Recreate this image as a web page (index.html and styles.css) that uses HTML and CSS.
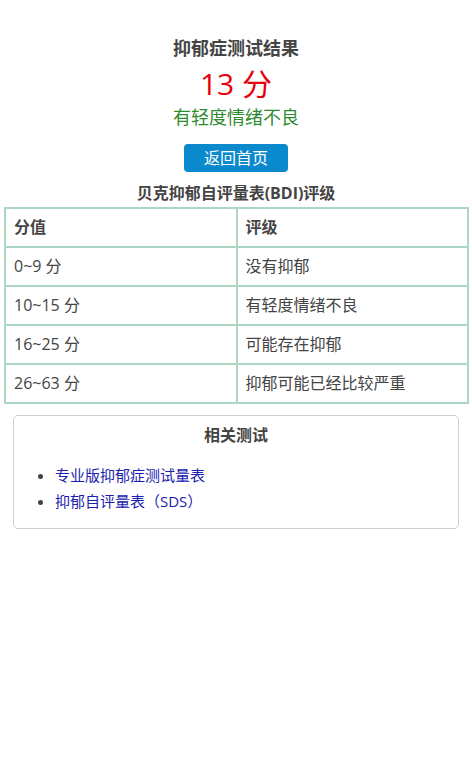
FILE: index.html
```html
<!DOCTYPE html>
<html lang="zh-CN">
<head>
<meta charset="utf-8">
<title>抑郁症测试结果</title>
<link rel="stylesheet" href="styles.css">
</head>
<body>
<div class="page">
  <div class="result">
    <h1 class="title">抑郁症测试结果</h1>
    <div class="score">13 分</div>
    <div class="verdict">有轻度情绪不良</div>
    <a class="btn" href="#">返回首页</a>
  </div>
  <h2 class="table-title">贝克抑郁自评量表(BDI)评级</h2>
  <table class="grade">
    <thead>
      <tr><th>分值</th><th>评级</th></tr>
    </thead>
    <tbody>
      <tr><td>0~9 分</td><td>没有抑郁</td></tr>
      <tr><td>10~15 分</td><td>有轻度情绪不良</td></tr>
      <tr><td>16~25 分</td><td>可能存在抑郁</td></tr>
      <tr><td>26~63 分</td><td>抑郁可能已经比较严重</td></tr>
    </tbody>
  </table>
  <div class="related">
    <h3 class="related-title">相关测试</h3>
    <ul class="related-list">
      <li><a href="#">专业版抑郁症测试量表</a></li>
      <li><a href="#">抑郁自评量表（SDS）</a></li>
    </ul>
  </div>
</div>
</body>
</html>
```
FILE: styles.css
```css
html, body {
  margin: 0;
  padding: 0;
  background: #fff;
}
body {
  font-family: "Open Sans", "Noto Sans CJK SC", sans-serif;
  color: #444;
}
.page {
  padding-top: 36px;
}
.result {
  display: flex;
  flex-direction: column;
  align-items: center;
}
.title {
  margin: 0;
  font-size: 18px;
  line-height: 24px;
  font-weight: bold;
  color: #444;
}
.score {
  margin-top: 6px;
  font-size: 30px;
  line-height: 36px;
  color: #e8000b;
}
.verdict {
  margin-top: 3px;
  font-size: 18px;
  line-height: 24px;
  color: #2f8a2f;
}
.btn {
  margin-top: 15px;
  width: 104px;
  height: 28px;
  line-height: 28px;
  text-align: center;
  background: #0b89cd;
  color: #fff;
  border-radius: 4px;
  font-size: 16px;
  text-decoration: none;
}
.table-title {
  margin: 10px 0 3px;
  text-align: center;
  font-size: 16px;
  line-height: 22px;
  font-weight: bold;
  color: #444;
}
.grade {
  margin-left: 4px;
  width: 465px;
  border-collapse: collapse;
  border: 2px solid #acd7c2;
  table-layout: fixed;
}
.grade th, .grade td {
  border: 2px solid #acd7c2;
  padding: 8px 8px;
  font-size: 16px;
  line-height: 21px;
  text-align: left;
  color: #444;
}
.grade th {
  font-weight: bold;
}
.related {
  margin: 11px 13px 0;
  border: 1px solid #cfcfcf;
  border-radius: 5px;
  padding: 8px 0 14px;
}
.related-title {
  margin: 0;
  text-align: center;
  font-size: 16px;
  line-height: 22px;
  font-weight: bold;
  color: #444;
}
.related-list {
  margin: 16px 0 0;
  padding-left: 41px;
  font-size: 15px;
  line-height: 26px;
}
.related-list a {
  color: #1c1cb0;
  text-decoration: none;
}
```
